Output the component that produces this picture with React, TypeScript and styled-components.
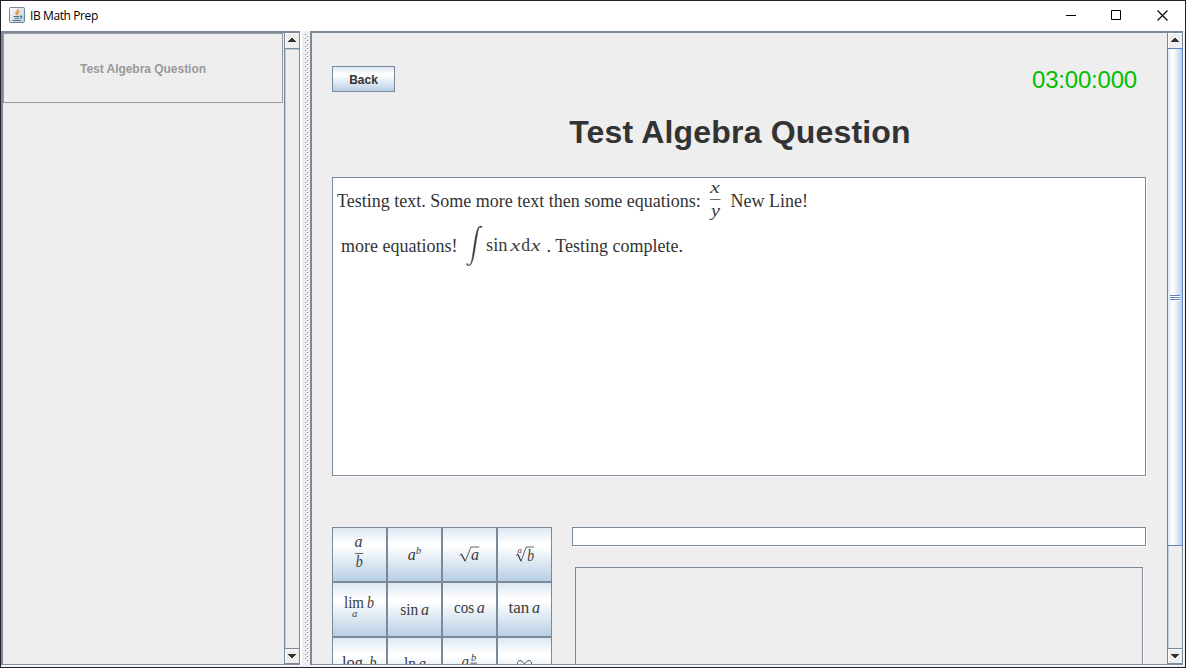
import React from "react";
import styled, { createGlobalStyle } from "styled-components";

const slate = "#7a8a99";
const face = "#eeeeee";

const Global = createGlobalStyle`
  * { box-sizing: border-box; }
  body { margin: 0; background: #231f2b; overflow: hidden; }
`;

const Window = styled.div`
  width: 1186px;
  height: 668px;
  border: 1px solid #231f2b;
  background: ${face};
  display: flex;
  flex-direction: column;
  font-family: "Liberation Sans", Arial, sans-serif;
  color: #333;
`;

const TitleBar = styled.header`
  height: 30px;
  flex: none;
  background: #fff;
  display: flex;
  align-items: center;
  padding: 0 0 2px 8px;
`;

const TitleText = styled.span`
  flex: 1;
  margin: 1px 0 0 5px;
  font: 12px/17px "Open Sans", "Noto Sans", sans-serif;
  letter-spacing: -0.4px;
  color: #000;
`;

const Caption = styled.span`
  width: 46px;
  display: flex;
  justify-content: center;
`;

const Body = styled.main`
  height: 636px;
  display: flex;
`;

const Pane = styled.section<{ $w: number }>`
  width: ${(p) => p.$w}px;
  height: 634px;
  flex: none;
  display: flex;
  border: solid ${slate};
  border-width: 2px 1px 1px 2px;
  box-shadow: 1px 1px 0 #fff;
`;

const Viewport = styled.div`
  flex: 1;
  min-width: 0;
  overflow: hidden;
`;

const QuestionItem = styled.div`
  width: 280px;
  height: 70px;
  padding-top: 2px;
  border: 1px solid #999;
  display: flex;
  align-items: center;
  justify-content: center;
  font-size: 12px;
  font-weight: bold;
  letter-spacing: -0.03px;
  color: #999;
`;

const ScrollBar = styled.div`
  width: 15px;
  flex: none;
  display: flex;
  flex-direction: column;
  border-left: 1px solid ${slate};
`;

const ArrowButton = styled.div<{ $down?: boolean }>`
  height: 16px;
  flex: none;
  display: flex;
  justify-content: center;
  align-items: center;
  background: ${face};
  box-shadow: inset 1px 1px 0 #fff;
  border: 0 solid ${slate};
  border-width: ${(p) => (p.$down ? "1px 0 1px" : "0 0 1px")};
`;

const UpDownGlyph = styled.svg<{ $down?: boolean }>`
  margin: ${(p) => (p.$down ? "0" : "0 0 1px")};
`;

const Track = styled.div`
  flex: 1;
  border-left: 1px solid #b8cfe5;
  box-shadow: inset 0 1px 0 #b8cfe5;
`;

const Thumb = styled.div`
  height: 498px;
  margin: -1px -1px 0 -2px;
  border: 1px solid #6382bf;
  background: linear-gradient(90deg, #dde8f3 0, #fff 30%, #fff 36%, #b8cfe5 100%);
  display: flex;
  align-items: center;
  justify-content: center;
`;

const Grip = styled.div`
  width: 10px;
  height: 6px;
  margin-top: 2px;
  background: repeating-linear-gradient(#6382bf 0 1px, #fff 1px 2px);
`;

const Divider = styled.div`
  width: 10px;
  height: 635px;
  flex: none;
  padding: 3px 0 0 3px;
  border-left: 2px solid #fff;
`;

const Content = styled.div`
  width: 855px;
  padding: 33px 21px 0 20px;
`;

const TopRow = styled.div`
  display: flex;
  justify-content: space-between;
  align-items: flex-start;
  height: 47px;
`;

const metal = "linear-gradient(#dde8f3 0, #fff 30%, #fff 34%, #b8cfe5 100%)";

const BackButton = styled.button`
  width: 63px;
  height: 26px;
  padding: 1px 0 0;
  border: 1px solid ${slate};
  background: ${metal};
  font: bold 12px "Liberation Sans", Arial, sans-serif;
  color: #333;
`;

const Timer = styled.div`
  margin-right: 9px;
  font-size: 24px;
  line-height: 28px;
  letter-spacing: -0.2px;
  color: #00c000;
`;

const Heading = styled.h1`
  margin: 0;
  height: 64px;
  padding-left: 2px;
  font-size: 32px;
  line-height: 38px;
  letter-spacing: 0.18px;
  text-align: center;
`;

const QuestionBox = styled.div`
  height: 299px;
  border: 1px solid ${slate};
  background: #fff;
  box-shadow: 1px 1px 0 #fff;
  padding-left: 4px;
  font: 18px "Liberation Serif", "Times New Roman", serif;
`;

const Line = styled.div<{ $indent?: number }>`
  height: 45px;
  padding-left: ${(p) => p.$indent ?? 0}px;
  display: flex;
  align-items: center;
  white-space: pre;
`;

const Run = styled.span<{ $w: number; $gap?: number; $drop?: number }>`
  width: ${(p) => p.$w}px;
  flex: none;
  padding-left: ${(p) => p.$gap ?? 0}px;
  padding-top: ${(p) => p.$drop ?? 0}px;
`;

const AnswerArea = styled.div`
  margin-top: 51px;
  display: flex;
`;

const Palette = styled.div`
  width: 220px;
  display: grid;
  grid-template-columns: repeat(4, 55px);
  grid-auto-rows: 55px;
`;

const Key = styled.button`
  padding: 0;
  border: 1px solid ${slate};
  background: ${metal};
  display: flex;
`;

const AnswerColumn = styled.div`
  flex: 1;
  margin-left: 20px;
`;

const AnswerField = styled.div`
  height: 19px;
  background: #fff;
  border: 1px solid ${slate};
  box-shadow: 1px 1px 0 #fff;
`;

const Preview = styled.div`
  height: 200px;
  margin: 21px 3px 0;
  border: 1px solid ${slate};
  box-shadow: 1px 1px 0 #fff;
`;

const MathSvg = styled.svg`
  display: block;
  flex: none;
  overflow: visible;
  fill: #3a3a3a;
  stroke: none;
  font-family: "Liberation Serif", "Times New Roman", serif;
`;

type GlyphProps = { x: number; y: number; w: number; s?: number; up?: boolean; children: string };

const T = ({ x, y, w, s = 16, up, children }: GlyphProps) => (
  <text x={x} y={y} fontSize={s} fontStyle={up ? "normal" : "italic"} textLength={w} lengthAdjust="spacingAndGlyphs">
    {children}
  </text>
);

const Rule = ({ x, y, w }: { x: number; y: number; w: number }) => (
  <rect x={x} y={y} width={w} height={0.9} opacity={0.85} />
);

const keys: React.ReactNode[] = [
  <><T x={22.5} y={19.7} w={8}>a</T><Rule x={22.7} y={26} w={8.5} /><T x={23.8} y={39.7} w={7}>b</T></>,
  <><T x={20.7} y={33} w={8}>a</T><T x={29} y={27} w={5.2} s={11}>b</T></>,
  <>
    <path d="M17.5 28.5l2.2-1.6 3.5 7.400 5.800-14.300h8.300" style={{ fill: "none" }} stroke="#333" strokeWidth=".75" />
    <path d="M19.200 27.300l3.800 6.500" stroke="#333" strokeWidth="1" />
    <T x={29} y={32.6} w={8}>a</T>
  </>,
  <>
    <path d="M19 28.500l2-1.600 3 7.400 5.200-14.300h7.800" style={{ fill: "none" }} stroke="#333" strokeWidth=".75" />
    <path d="M20.500 27.300l3.400 6.500" stroke="#333" strokeWidth="1" />
    <T x={20.8} y={26} w={4} s={8}>a</T><T x={30.3} y={33.5} w={6.8}>b</T>
  </>,
  <><T x={12} y={26} w={20} up>lim</T><T x={35} y={26} w={7}>b</T><T x={20} y={35} w={5.2} s={10.5}>a</T></>,
  <><T x={13.3} y={32.5} w={18} up>sin</T><T x={34} y={32.5} w={8}>a</T></>,
  <><T x={12} y={30.5} w={20.2} up>cos</T><T x={34.8} y={30.5} w={8}>a</T></>,
  <><T x={11.5} y={31} w={20.7} up>tan</T><T x={35} y={31} w={8}>a</T></>,
  <><T x={10} y={30.5} w={21} up>log</T><T x={37.4} y={30.5} w={7}>b</T></>,
  <><T x={17} y={32} w={12} up>ln</T><T x={31.5} y={32} w={7.5}>a</T></>,
  <><T x={19.5} y={30} w={7.5}>a</T><T x={29} y={23.5} w={5.2} s={11}>b</T><Rule x={28.3} y={25.7} w={6.6} /></>,
  <path d="M27.500 27c-2-2.600-3.200-3.500-4.500-3.500-3.500 0-3.500 7 0 7 3.300 0 5.700-7 9-7 3.500 0 3.500 7 0 7-1.500 0-2.800-1-4.500-3.500z" style={{ fill: "none" }} stroke="#333" strokeWidth=".8" />,
];

const Fraction = () => (
  <MathSvg width={10} height={45}>
    <T x={0} y={14.5} w={9.8} s={17}>x</T>
    <Rule x={0} y={21} w={10.5} />
    <T x={1} y={38} w={9} s={17.5}>y</T>
  </MathSvg>
);

const Integral = () => (
  <MathSvg width={76} height={45}>
    <path
      transform="translate(0 -1)"
      stroke="#3a3a3a"
      strokeWidth=".4"
      d="M1.3 41.3C1 43.5 3.8 43.4 4.7 41.5C7 37 8.3 13.5 11.8 6.3C13 3.5 15.7 3.3 16 5.2C15.4 6.4 14.5 5.8 14.3 5C12.3 5.6 12.1 9 11.3 13.2C9.3 24 8.3 36 5.7 41C4.3 44.5 .6 44.2 .6 42C.7 41.2 1.2 41 1.3 41.3z"
    />
    <T x={20} y={28} w={21.5} s={18} up>sin</T>
    <T x={44.4} y={28} w={9.8} s={17}>x</T>
    <T x={55.3} y={28} w={8.8} s={18} up>d</T>
    <T x={64.7} y={28} w={9.8} s={17}>x</T>
  </MathSvg>
);

const JavaIcon = () => (
  <svg width="16" height="16" viewBox="0 0 16 16">
    <defs>
      <linearGradient id="tile" x1="0" y1="0" x2="1" y2="1">
        <stop offset="0" stopColor="#fff" />
        <stop offset="1" stopColor="#b9c9d6" />
      </linearGradient>
    </defs>
    <rect x=".5" y=".5" width="15" height="15" rx="1" fill="url(#tile)" stroke="#6f8ba3" />
    <path d="M9 2c.8 2-3 2.800-2 4.700l1 1.300M10.700 4.300c-2 .8-2.600 1.600-1.500 3.200" fill="none" stroke="#e8842c" strokeWidth="1.200" />
    <path d="M4.500 9.500h6M5.500 11.300h4.500M3.500 13.500h8M11 9.200c2.500-.7 2.300 1.900.2 2.200" fill="none" stroke="#4c7392" strokeWidth="1.100" />
  </svg>
);

const Arrow = ({ down }: { down?: boolean }) => (
  <UpDownGlyph $down={down} width="8" height="4" shapeRendering="crispEdges" fill="#333">
    <path d={down ? "M0 0h8v1H0zM1 1h6v1H1zM2 2h4v1H2zM3 3h2v1H3z" : "M3 0h2v1H3zM2 1h4v1H2zM1 2h6v1H1zM0 3h8v1H0z"} />
  </UpDownGlyph>
);

const Bumps = () => (
  <svg width="5" height="628" shapeRendering="crispEdges">
    <defs>
      <pattern id="bumps" width="4" height="4" patternUnits="userSpaceOnUse">
        <path d="M0 0h1v1H0zM2 2h1v1H2z" fill={slate} />
        <path d="M1 1h1v1H1zM3 3h1v1H3z" fill="#fff" />
      </pattern>
    </defs>
    <rect width="4" height="628" fill="url(#bumps)" />
  </svg>
);

export default function App() {
  return (
    <>
      <Global />
      <Window>
        <TitleBar>
          <JavaIcon />
          <TitleText>IB Math Prep</TitleText>
          <Caption><svg width="11" height="11"><path d="M1 5.500h10" stroke="#000" /></svg></Caption>
          <Caption><svg width="10" height="10"><path d="M.5.5h9v9h-9z" fill="none" stroke="#000" /></svg></Caption>
          <Caption><svg width="11" height="11"><path d="M.5.5l10 10M10.500.5l-10 10" stroke="#000" strokeWidth="1.100" /></svg></Caption>
        </TitleBar>
        <Body>
          <Pane $w={299}>
            <Viewport>
              <QuestionItem>Test Algebra Question</QuestionItem>
            </Viewport>
            <ScrollBar>
              <ArrowButton><Arrow /></ArrowButton>
              <Track />
              <ArrowButton $down><Arrow down /></ArrowButton>
            </ScrollBar>
          </Pane>
          <Divider><Bumps /></Divider>
          <Pane $w={873}>
            <Viewport>
              <Content>
                <TopRow>
                  <BackButton>Back</BackButton>
                  <Timer>03:00:000</Timer>
                </TopRow>
                <Heading>Test Algebra Question</Heading>
                <QuestionBox>
                  <Line>
                    <Run $w={373} $drop={1}>Testing text. Some more text then some equations:</Run>
                    <Fraction />
                    <Run $w={95} $gap={1.5} $drop={1}>{"  New Line!"}</Run>
                  </Line>
                  <Line $indent={4}>
                    <Run $w={125} $drop={1}>more equations!</Run>
                    <Integral />
                    <Run $w={150} $drop={1}>{" . Testing complete."}</Run>
                  </Line>
                </QuestionBox>
                <AnswerArea>
                  <Palette>
                    {keys.map((k, i) => (
                      <Key key={i}><MathSvg width={53} height={53} viewBox="1 1 53 53">{k}</MathSvg></Key>
                    ))}
                  </Palette>
                  <AnswerColumn>
                    <AnswerField />
                    <Preview />
                  </AnswerColumn>
                </AnswerArea>
              </Content>
            </Viewport>
            <ScrollBar>
              <ArrowButton><Arrow /></ArrowButton>
              <Track><Thumb><Grip /></Thumb></Track>
              <ArrowButton $down><Arrow down /></ArrowButton>
            </ScrollBar>
          </Pane>
        </Body>
      </Window>
    </>
  );
}
